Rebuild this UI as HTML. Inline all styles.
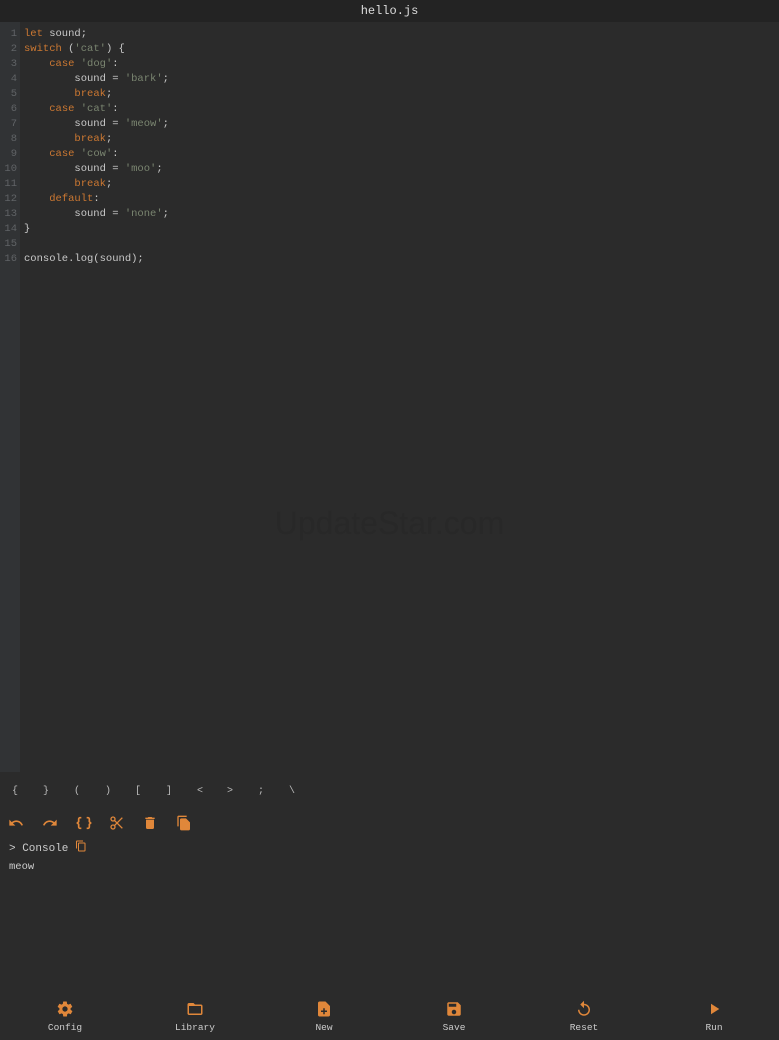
<!DOCTYPE html>
<html><head><meta charset="utf-8"><style>
body{margin:0;width:779px;height:1040px;background:#2b2b2b;font-family:"Liberation Mono",monospace;overflow:hidden;position:relative;color:#c9c9c9}
.title{position:absolute;top:0;left:0;width:779px;height:22px;background:#232323;color:#ddd;font-size:12px;text-align:center;line-height:22px}
.gutter{position:absolute;top:22px;left:0;width:20px;height:750px;background:#313335}
.code{position:absolute;top:27px;left:0;font-size:10.5px;line-height:15px;white-space:pre}
.ln{display:inline-block;width:17px;text-align:right;color:#606366;margin-right:7px}
.k{color:#cc7832}.s{color:#7a8570}
.wm{position:absolute;top:505px;left:0;width:779px;text-align:center;font-family:"Liberation Sans",sans-serif;font-size:32px;color:#282828}
.keys{position:absolute;top:786px;left:0;font-size:10px;color:#bbb}
.keys span{position:absolute;width:20px;text-align:center}
.tools svg{position:absolute;top:815px}
.con{position:absolute;top:840px;left:9px;font-size:11px;color:#ccc}
.out{position:absolute;top:861px;left:9px;font-size:10.5px;color:#ccc}
.bar div{position:absolute;top:1000px;width:80px;text-align:center;font-size:9.5px;color:#ccc}
.bar svg{display:block;margin:0 auto 4px}
</style></head><body>
<div class="title">hello.js</div>
<div class="gutter"></div>
<div class="code"><span class="ln">1</span><span class="k">let</span> sound;
<span class="ln">2</span><span class="k">switch</span> (<span class="s">'cat'</span>) {
<span class="ln">3</span>    <span class="k">case</span> <span class="s">'dog'</span>:
<span class="ln">4</span>        sound = <span class="s">'bark'</span>;
<span class="ln">5</span>        <span class="k">break</span>;
<span class="ln">6</span>    <span class="k">case</span> <span class="s">'cat'</span>:
<span class="ln">7</span>        sound = <span class="s">'meow'</span>;
<span class="ln">8</span>        <span class="k">break</span>;
<span class="ln">9</span>    <span class="k">case</span> <span class="s">'cow'</span>:
<span class="ln">10</span>        sound = <span class="s">'moo'</span>;
<span class="ln">11</span>        <span class="k">break</span>;
<span class="ln">12</span>    <span class="k">default</span>:
<span class="ln">13</span>        sound = <span class="s">'none'</span>;
<span class="ln">14</span>}
<span class="ln">15</span>
<span class="ln">16</span>console.log(sound);</div>
<div class="wm">UpdateStar.com</div>
<div class="keys"><span style="left:5px">{</span><span style="left:36px">}</span><span style="left:67px">(</span><span style="left:98px">)</span><span style="left:128px">[</span><span style="left:159px">]</span><span style="left:190px">&lt;</span><span style="left:220px">&gt;</span><span style="left:251px">;</span><span style="left:282px">\</span></div>
<div class="tools">
<svg style="left:8px" width="16" height="16" viewBox="0 0 24 24"><path d="M12.5 8c-2.6 0-5 1-6.9 2.6L2 7v9h9l-3.6-3.6c1.4-1.2 3.2-1.9 5.1-1.9 3.5 0 6.5 2.3 7.6 5.5l2.4-.8C21 11 17.1 8 12.5 8z" fill="#e0873a"/></svg>
<svg style="left:42px" width="16" height="16" viewBox="0 0 24 24"><path d="M18.4 10.6C16.6 9 14.2 8 11.5 8 6.9 8 3 11 1.5 15.2l2.4.8c1.1-3.2 4.1-5.5 7.6-5.5 2 0 3.7.7 5.1 1.9L13 16h9V7z" fill="#e0873a"/></svg>
<svg style="left:76px" width="16" height="16" viewBox="0 0 24 24"><path d="M8 4H6c-1 0-2 1-2 2v4l-2 2 2 2v4c0 1 1 2 2 2h2M16 4h2c1 0 2 1 2 2v4l2 2-2 2v4c0 1-1 2-2 2h-2" stroke="#e0873a" stroke-width="2.5" fill="none"/></svg>
<svg style="left:109px" width="16" height="16" viewBox="0 0 24 24"><circle cx="6" cy="6" r="3" stroke="#e0873a" stroke-width="2" fill="none"/><circle cx="6" cy="18" r="3" stroke="#e0873a" stroke-width="2" fill="none"/><path d="M8 8l12 12M8 16L20 4" stroke="#e0873a" stroke-width="2"/></svg>
<svg style="left:142px" width="16" height="16" viewBox="0 0 24 24"><path d="M6 19c0 1.1.9 2 2 2h8c1.1 0 2-.9 2-2V7H6zM19 4h-3.5l-1-1h-5l-1 1H5v2h14z" fill="#e0873a"/></svg>
<svg style="left:176px" width="16" height="16" viewBox="0 0 24 24"><path d="M16 1H4c-1.1 0-2 .9-2 2v14h2V3h12zm-1 4l6 6v10c0 1.1-.9 2-2 2H8c-1.1 0-2-.9-2-2V7c0-1.1.9-2 2-2z" fill="#e0873a"/></svg>
</div>
<div class="con">&gt; Console <svg width="12" height="12" viewBox="0 0 24 24" style="vertical-align:-1px"><path d="M16 1H4c-1.1 0-2 .9-2 2v14h2V3h12zm3 4H8c-1.1 0-2 .9-2 2v14c0 1.1.9 2 2 2h11c1.1 0 2-.9 2-2V7c0-1.1-.9-2-2-2zm0 16H8V7h11z" fill="#e0873a"/></svg></div>
<div class="out">meow</div>
<div class="bar">
<div style="left:25px"><svg width="18" height="18" viewBox="0 0 24 24"><path d="M19.4 13c.04-.3.1-.7.1-1s-.03-.7-.1-1l2.1-1.6c.2-.2.2-.4.1-.6l-2-3.5c-.1-.2-.4-.3-.6-.2l-2.5 1c-.5-.4-1.1-.7-1.700-1l-.4-2.6C14.5 2.2 14.2 2 14 2h-4c-.2 0-.5.2-.5.4l-.4 2.7c-.6.2-1.1.6-1.7 1l-2.5-1c-.2-.1-.5 0-.6.2l-2 3.5c-.1.2-.1.5.1.6L4.6 11c0 .3-.1.7-.1 1s0 .7.1 1l-2.1 1.6c-.2.2-.2.4-.1.6l2 3.5c.1.2.4.3.6.2l2.5-1c.5.4 1.1.7 1.7 1l.4 2.7c0 .2.2.4.5.4h4c.2 0 .5-.2.5-.4l.4-2.7c.6-.3 1.2-.6 1.7-1l2.5 1c.2.1.5 0 .6-.2l2-3.5c.1-.2.1-.5-.1-.6zM12 15.5c-1.9 0-3.5-1.6-3.5-3.5s1.6-3.5 3.5-3.5 3.5 1.6 3.5 3.5-1.6 3.5-3.5 3.5z" fill="#e0873a"/></svg>Config</div>
<div style="left:155px"><svg width="18" height="18" viewBox="0 0 24 24"><path d="M20 6h-8l-2-2H4c-1.1 0-2 .9-2 2v12c0 1.1.9 2 2 2h16c1.1 0 2-.9 2-2V8c0-1.1-.9-2-2-2zm0 12H4V8h16z" fill="#e0873a"/></svg>Library</div>
<div style="left:284px"><svg width="18" height="18" viewBox="0 0 24 24"><path d="M14 2H6c-1.1 0-2 .9-2 2v16c0 1.1.9 2 2 2h12c1.1 0 2-.9 2-2V8zm2 14h-3v3h-2v-3H8v-2h3v-3h2v3h3z" fill="#e0873a"/></svg>New</div>
<div style="left:414px"><svg width="18" height="18" viewBox="0 0 24 24"><path d="M17 3H5c-1.1 0-2 .9-2 2v14c0 1.1.9 2 2 2h14c1.1 0 2-.9 2-2V7zm-5 16c-1.7 0-3-1.300-3-3s1.3-3 3-3 3 1.3 3 3-1.3 3-3 3zm3-10H5V5h10z" fill="#e0873a"/></svg>Save</div>
<div style="left:544px"><svg width="18" height="18" viewBox="0 0 24 24"><path d="M12 5V1L7 6l5 5V7c3.3 0 6 2.7 6 6s-2.7 6-6 6-6-2.7-6-6H4c0 4.4 3.6 8 8 8s8-3.6 8-8-3.6-8-8-8z" fill="#e0873a"/></svg>Reset</div>
<div style="left:674px"><svg width="18" height="18" viewBox="0 0 24 24"><path d="M8 5v14l11-7z" fill="#e0873a"/></svg>Run</div>
</div>
</body></html>
